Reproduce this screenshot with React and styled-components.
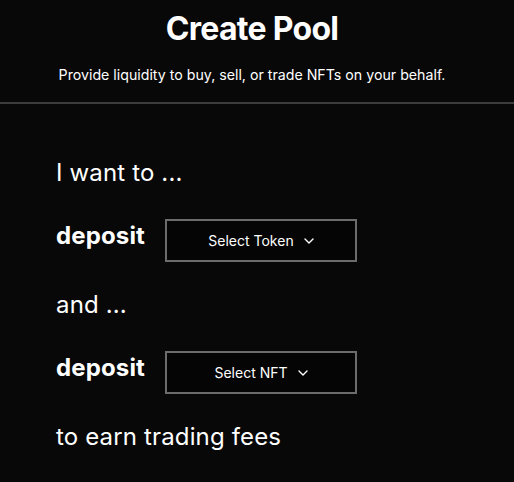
import React from "react";
import styled, { createGlobalStyle } from "styled-components";

const GlobalStyle = createGlobalStyle`
  html, body {
    margin: 0;
    padding: 0;
    background: #080808;
    color: #ffffff;
    font-family: Inter, "Open Sans", sans-serif;
  }
`;

const Page = styled.div`
  width: 514px;
  min-height: 482px;
  background: #080808;
`;

const Header = styled.header`
  display: flex;
  flex-direction: column;
  align-items: center;
  padding: 10px 10px 18px 0;
  border-bottom: 2px solid #3c3c3c;
`;

const Title = styled.h1`
  margin: 0;
  font-size: 32px;
  font-weight: 700;
  letter-spacing: -0.7px;
  line-height: 38px;
`;

const Subtitle = styled.p`
  margin: 18px 0 0;
  font-size: 14.2px;
  line-height: 18px;
`;

const Body = styled.section`
  display: flex;
  flex-direction: column;
  padding: 54px 56px 0;
  gap: 28px;
`;

const Line = styled.div`
  font-size: 24px;
  line-height: 30px;
  font-weight: ${({ $bold }) => ($bold ? 700 : 400)};
  letter-spacing: 0.15px;
`;

const Label = styled(Line)`
  width: 91px;
  margin-top: 2px;
`;

const Row = styled.div`
  display: flex;
  align-items: flex-start;
  gap: 18px;
  margin-top: 3px;
`;

const SelectButton = styled.button`
  display: flex;
  align-items: center;
  justify-content: center;
  gap: 10px;
  width: 192px;
  height: 43px;
  padding: 0;
  background: #050505;
  border: 2px solid #6c6c6c;
  color: #ffffff;
  font-family: inherit;
  font-size: 14px;
  cursor: pointer;
`;

const Chevron = () => (
  <svg width="10" height="10" viewBox="0 0 10 10" fill="none">
    <path d="M1 3 L5 7 L9 3" stroke="#fff" strokeWidth="1.4" strokeLinecap="round" strokeLinejoin="round" />
  </svg>
);

export default function App() {
  return (
    <Page>
      <GlobalStyle />
      <Header>
        <Title>Create Pool</Title>
        <Subtitle>Provide liquidity to buy, sell, or trade NFTs on your behalf.</Subtitle>
      </Header>
      <Body>
        <Line>I want to ...</Line>
        <Row>
          <Label $bold>deposit</Label>
          <SelectButton>
            Select Token <Chevron />
          </SelectButton>
        </Row>
        <Line>and ...</Line>
        <Row>
          <Label $bold>deposit</Label>
          <SelectButton>
            Select NFT <Chevron />
          </SelectButton>
        </Row>
        <Line>to earn trading fees</Line>
      </Body>
    </Page>
  );
}
